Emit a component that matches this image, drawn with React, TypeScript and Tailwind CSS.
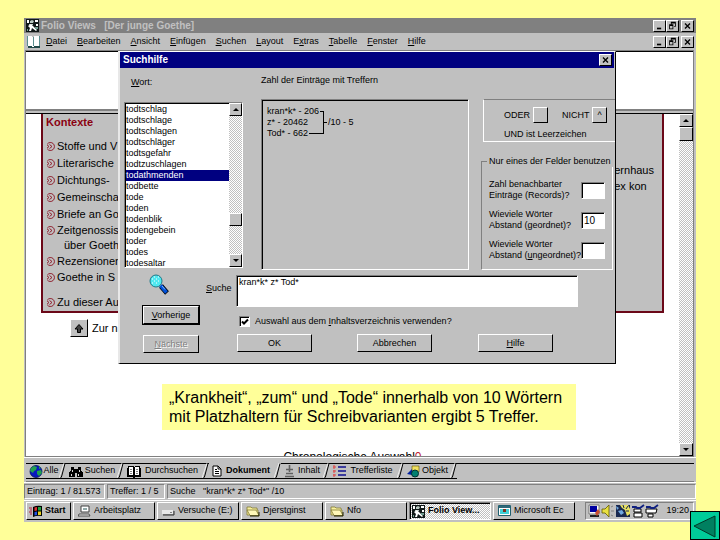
import { useState } from 'react'
import type { ReactNode } from 'react'
import clsx from 'clsx'

const WORDS = [
  'todtschlag',
  'todtschlage',
  'todtschlagen',
  'todtschläger',
  'todtsgefahr',
  'todtzuschlagen',
  'todathmenden',
  'todbette',
  'tode',
  'toden',
  'todenblik',
  'todengebein',
  'toder',
  'todes',
  'todesaltar',
]

const MENU = [
  '&Datei',
  '&Bearbeiten',
  '&Ansicht',
  '&Einfügen',
  '&Suchen',
  '&Layout',
  'E&xtras',
  '&Tabelle',
  '&Fenster',
  '&Hilfe',
]

const RAISED = 'border border-t-white border-l-white border-r-black border-b-black bg-[#c0c0c0]'
const GROOVE = 'border border-t-[#808080] border-l-[#808080] border-r-white border-b-white'
const SUNKEN = clsx(GROOVE, 'shadow-[inset_1px_1px_#000]')
const DITHER =
  'bg-[conic-gradient(#fff_25%,#c0c0c0_0_50%,#fff_0_75%,#c0c0c0_0)] bg-[length:2px_2px]'

// "&" marks the underlined letter, as in a resource file
const Mnemonic = ({ text }: { text: string }) => {
  const i = text.indexOf('&')
  if (i < 0) return <>{text}</>
  return (
    <span className="whitespace-pre">
      {text.slice(0, i)}
      <u className="underline-offset-1">{text[i + 1]}</u>
      {text.slice(i + 2)}
    </span>
  )
}

const FolioIcon = () => (
  <svg viewBox="0 0 13 13" className="h-[13px] w-[13px] shrink-0">
    <path d="M0 0h13v13H0z" fill="#101818" />
    <path d="M1 1h2v3H1zM9 1h3v2H9zM10 5h2v2h-2z" fill="#fff" />
    <path d="M4 2l2-1 2 1-1 2H4zM3 5h4v1H3z" fill="#b8c8c0" />
    <path d="M2 7l3-2 6 6-1 1-4-3-1 3H3l1-3z" fill="#fff" />
    <path d="M9 8h3v2H9zM1 10h1v2H1z" fill="#6f9c90" />
  </svg>
)

const BookIcon = () => (
  <svg viewBox="0 0 14 13" className="h-[13px] w-[14px] shrink-0" shapeRendering="crispEdges">
    <path d="M1 2h12v11H1z" fill="#204848" />
    <path d="M0 1h4l2 1 2-1h4v10H8l-2 1-2-1H0z" fill="#fff" />
    <path d="M0 1h1v10H0zM6 2h1v9H6zM12 1h1v10h-1z" fill="#5b9090" />
  </svg>
)

const Minimize = () => <path d="M3 8h5v2H3z" fill="#000" />
const Restore = () => (
  <path
    d="M4 1h6v6H8V6h1V3H5v1H4zM2 4h5v6H2zm1 2v3h3V6z"
    fill="#000"
    fillRule="evenodd"
  />
)
const Close = () => <path d="M3 3l6 6M9 3l-6 6" stroke="#000" strokeWidth="1.6" />

const CaptionButton = ({ label, children }: { label: string; children: ReactNode }) => (
  <button aria-label={label} className={clsx('h-3 w-[13px] shrink-0', RAISED)}>
    <svg viewBox="0 0 12 12" className="h-full w-full">
      {children}
    </svg>
  </button>
)

const CaptionButtons = () => (
  <div className="ml-auto flex pr-0.5">
    <CaptionButton label="Minimieren">
      <Minimize />
    </CaptionButton>
    <CaptionButton label="Wiederherstellen">
      <Restore />
    </CaptionButton>
    <span className="w-0.5" />
    <CaptionButton label="Schließen">
      <Close />
    </CaptionButton>
  </div>
)

const ScrollArrow = ({ up = false }: { up?: boolean }) => (
  <button
    aria-label={up ? 'Nach oben' : 'Nach unten'}
    className={clsx('flex h-[13px] w-full shrink-0 items-center justify-center', RAISED)}
  >
    <svg viewBox="0 0 6 3" className="h-[3px] w-1.5">
      <path d={up ? 'M0 3h6L3 0z' : 'M0 0h6L3 3z'} fill="#000" />
    </svg>
  </button>
)

const Bullet = () => (
  <svg viewBox="0 0 9 9" className="h-[9px] w-[9px] shrink-0" fill="none" stroke="#8a1020">
    <path d="M1.300 2A4 4 0 1 1 1.300 7" strokeWidth="0.900" />
    <path d="M3.500 2.500l2.500 2-2.500 2M1 2.800l2 1.700-2 1.700" strokeWidth="0.900" />
  </svg>
)

const Context = ({ children, short = false }: { children: ReactNode; short?: boolean }) => (
  <li className={clsx('flex items-center gap-0.5', short ? 'h-[15px]' : 'h-[17px]')}>
    <Bullet />
    <a href="#kontext">{children}</a>
  </li>
)

const DialogButton = ({
  text,
  isDefault = false,
  disabled = false,
}: {
  text: string
  isDefault?: boolean
  disabled?: boolean
}) => (
  <button
    disabled={disabled}
    className={clsx(
      'flex h-[18px] w-full items-center justify-center',
      RAISED,
      isDefault && 'outline outline-black',
      disabled && 'text-[#808080] [text-shadow:1px_1px_#fff]',
    )}
  >
    <Mnemonic text={text} />
  </button>
)

const DistanceField = ({ lines, value = '' }: { lines: [string, string]; value?: string }) => (
  <label className="flex items-center justify-between">
    <span className="whitespace-nowrap leading-[11px]">
      <Mnemonic text={lines[0]} />
      <br />
      <Mnemonic text={lines[1]} />
    </span>
    <input
      defaultValue={value}
      className={clsx('h-[17px] w-6 shrink-0 bg-white pl-0.5 text-[10px] outline-none', SUNKEN)}
    />
  </label>
)

const Lens = () => (
  <svg viewBox="0 0 20 21" className="h-[21px] w-5">
    <path d="M12 12l6 7" stroke="#000" strokeWidth="5" />
    <path d="M11.500 11.500l6 7" stroke="#0050d8" strokeWidth="3.500" />
    <path d="M13 12l3 3.500" stroke="#80b8ff" strokeWidth="1" />
    <circle cx="7" cy="7" r="6" fill="#50e8f0" stroke="#207888" />
    <path d="M3 5h1M5 3h1M7 5h1M9 3h1M5 7h1M9 7h1M7 9h1M3 9h1" stroke="#fff" />
  </svg>
)

const SearchDialog = () => {
  const [selected, setSelected] = useState('todathmenden')

  return (
    <section
      role="dialog"
      aria-label="Suchhilfe"
      className="absolute top-[51px] left-[118px] flex h-[313px] w-[498px] flex-col border border-l-2 border-t-white border-l-[#e8e8e8] border-r-black border-b-black bg-[#c0c0c0] text-[9px] leading-3"
    >
      <header className="mr-px flex h-4 items-center bg-[#000080] pr-0.5 pl-[3px] text-[10px] font-bold text-white">
        <h2>Suchhilfe</h2>
        <div className="ml-auto flex">
          <CaptionButton label="Schließen">
            <Close />
          </CaptionButton>
        </div>
      </header>

      <div className="flex h-[203px] pl-1">
        {/* Word list */}
        <div className="w-[119px] shrink-0">
          <h3 className="h-[34px] pt-2 pl-[7px]">
            <Mnemonic text="&Wort:" />
          </h3>
          <div className={clsx('flex h-[166px] overflow-hidden bg-white', GROOVE)}>
            <ul
              role="listbox"
              aria-label="Wort"
              className="flex-1 border-l border-black pt-px shadow-[inset_0_1px_#000]"
            >
              {WORDS.map((word) => (
                <li
                  key={word}
                  role="option"
                  aria-selected={word === selected}
                  onClick={() => setSelected(word)}
                  className={clsx(
                    'h-[11px] leading-[11px]',
                    word === selected && 'bg-[#000080] text-white',
                  )}
                >
                  {word}
                </li>
              ))}
            </ul>
            <div className={clsx('flex w-[13px] flex-col', DITHER)}>
              <ScrollArrow up />
              <div className="flex-1" />
              <div className={clsx('h-[13px]', RAISED)} />
              <div className="h-7" />
              <ScrollArrow />
            </div>
          </div>
        </div>

        {/* Hit tree */}
        <div className="ml-[18px] w-[208px] shrink-0">
          <h3 className="h-[31px] pt-1.5 whitespace-nowrap">Zahl der Einträge mit Treffern</h3>
          <div
            className={clsx('flex h-[171px] items-start pt-1.5 pl-[5px] leading-[11px]', SUNKEN)}
          >
            <div className="w-[53px] whitespace-nowrap">
              <p>kran*k* - 206</p>
              <p>z* - 20462</p>
              <p>Tod* - 662</p>
            </div>
            <svg
              viewBox="0 0 8 33"
              className="h-[33px] w-2 overflow-visible"
              fill="none"
              stroke="#000"
              shapeRendering="crispEdges"
            >
              <path d="M0 5.500h3.500v22H-11M3.500 16.500H7" />
            </svg>
            <p className="pt-[11px]">/10 - 5</p>
          </div>
        </div>

        {/* Operators and distances */}
        <div className="ml-3 flex min-w-0 flex-1 flex-col pt-[31px]">
          <div className="ml-0.5 h-[43px] border border-r-0 border-t-[#808080] border-b-white border-l-white pt-[7px] pl-5">
            <div className="flex items-center">
              <label htmlFor="oder" className="w-[29px]">
                ODER
              </label>
              <button id="oder" className={clsx('h-4 w-[15px]', RAISED)} />
              <label htmlFor="nicht" className="ml-3.5 w-[30px]">
                NICHT
              </label>
              <button id="nicht" className={clsx('h-4 w-[15px]', RAISED)}>
                ^
              </button>
            </div>
            <p className="pt-[5px]">UND ist Leerzeichen</p>
          </div>
          <fieldset className={clsx('mt-[13px] mr-0.5 h-[115px] min-w-0 px-[7px]', GROOVE)}>
            <legend className="-ml-0.5 px-0.5 whitespace-nowrap">
              Nur eines der Felder benutzen
            </legend>
            <div className="flex flex-col gap-2 pt-3">
              <DistanceField lines={['Zahl benachbarter', 'Einträge (Records)?']} />
              <DistanceField lines={['Wieviele Wörter', 'Abstand (geordnet)?']} value="10" />
              <DistanceField lines={['Wieviele Wörter', 'Abstand (&ungeordnet)?']} />
            </div>
          </fieldset>
        </div>
      </div>

      <div className="flex flex-1 pl-[23px]">
        <div className="flex w-14 shrink-0 flex-col">
          <div className="h-[35px] pt-[3px] pl-1.5">
            <Lens />
          </div>
          <DialogButton text="&Vorherige" isDefault />
          <div className="h-[11px]" />
          <DialogButton text="&Nächste" disabled />
        </div>
        <div className="ml-[7px] flex flex-1 flex-col">
          <div className="flex pt-1">
            <label htmlFor="suche" className="w-[30px] shrink-0 pt-[7px]">
              <Mnemonic text="&Suche" />
            </label>
            <textarea
              id="suche"
              defaultValue="kran*k* z* Tod*"
              className={clsx('h-8 w-[342px] resize-none bg-white pl-0.5 outline-none', SUNKEN)}
            />
          </div>
          <label className="mt-2 ml-[33px] flex items-center gap-[5px]">
            <span className="grid">
              <input
                type="checkbox"
                defaultChecked
                className={clsx(
                  'peer col-start-1 row-start-1 h-[11px] w-[11px] appearance-none bg-white',
                  SUNKEN,
                )}
              />
              <svg
                viewBox="0 0 11 11"
                className="pointer-events-none invisible col-start-1 row-start-1 h-[11px] w-[11px] peer-checked:visible"
              >
                <path d="M3 5.500l2 2L9 3.500" stroke="#000" strokeWidth="2" fill="none" />
              </svg>
            </span>
            <Mnemonic text="Auswahl aus dem &Inhaltsverzeichnis verwenden?" />
          </label>
          <div className="mt-[7px] ml-[31px] flex">
            <div className="w-[75px]">
              <DialogButton text="OK" />
            </div>
            <div className="ml-[45px] w-[75px]">
              <DialogButton text="Abbrechen" />
            </div>
            <div className="ml-[46px] w-[75px]">
              <DialogButton text="&Hilfe" />
            </div>
          </div>
        </div>
      </div>
    </section>
  )
}

const GlobeIcon = () => (
  <svg viewBox="0 0 14 13" className="h-[13px] w-3.5 shrink-0">
    <circle cx="7" cy="6.500" r="6" fill="#0818c0" stroke="#001050" strokeWidth="0.8" />
    <path d="M2 3l3-2 3 1-1 3-2 1-1 2-3-2zM8 6l4-1 1 3-3 3-2-2zM10 1l2 2-2 1z" fill="#20a050" />
  </svg>
)

const BinocularsIcon = () => (
  <svg viewBox="0 0 14 13" className="h-[13px] w-3.5 shrink-0" shapeRendering="crispEdges">
    <path d="M2 2h3v2h4V2h3v3l2 3v4H8V8H6v4H0V8l2-3z" fill="#000" />
    <path d="M3 5h1v2H3zM10 5h1v2h-1zM2 9h1v2H2zM9 9h1v2H9z" fill="#d8d8d8" />
  </svg>
)

const OpenBookIcon = () => (
  <svg viewBox="0 0 14 13" className="h-[13px] w-3.5 shrink-0" shapeRendering="crispEdges">
    <path d="M0 3h1V1h5l1 1 1-1h5v2h1v9H8v1H6v-1H0z" fill="#000" />
    <path d="M2 2h4v8H2zM8 2h4v8H8z" fill="#fff" />
    <path d="M3 4.500h2M3 6.500h2M3 8.500h2M9 4.500h2M9 6.500h2M9 8.500h2" stroke="#808080" />
  </svg>
)

const PageIcon = () => (
  <svg viewBox="0 0 10 12" className="h-3 w-2.5 shrink-0">
    <path d="M1 1h5l3 3v7H1z" fill="#fff" stroke="#000" />
    <path d="M6 1v3h3M3 4.500h2M3 6.500h4M3 8.500h4" stroke="#000" fill="none" />
  </svg>
)

const OutlineIcon = () => (
  <svg viewBox="0 0 11 13" className="h-[13px] w-[11px] shrink-0">
    <path d="M5.500 0v7M2 4.500h7M2 8.500h7M1 11.500h9" stroke="#606060" strokeWidth="1.600" />
  </svg>
)

const HitListIcon = () => (
  <svg viewBox="0 0 13 12" className="h-3 w-[13px] shrink-0">
    <path d="M1 0v4M0 2h3M1 5v3M0 6h3M1 9v3M0 10h3" stroke="#e04040" />
    <path d="M5 2h8M5 6h8M5 10h8" stroke="#101090" strokeWidth="1.600" />
  </svg>
)

const ObjectIcon = () => (
  <svg viewBox="0 0 13 13" className="h-[13px] w-[13px] shrink-0">
    <path d="M5 1h7v6H5z" fill="#f0e060" stroke="#605000" strokeWidth="0.600" />
    <path d="M0 9l5-5v6z" fill="#0020a0" />
    <circle cx="8" cy="8.500" r="3.500" fill="#008070" stroke="#003030" />
  </svg>
)

const Slash = () => (
  <svg viewBox="0 0 7 16" className="h-4 w-[7px] shrink-0">
    <path d="M1 15.500Q2.500 15 3 12L6 0.500" stroke="#000" fill="none" />
    <path d="M0 15L5 0" stroke="#fff" fill="none" strokeWidth="0.700" />
  </svg>
)

const TABS = [
  { label: 'Alle', icon: <GlobeIcon />, width: 'w-10' },
  { label: 'Suchen', icon: <BinocularsIcon />, width: 'w-[58px]' },
  { label: 'Durchsuchen', icon: <OpenBookIcon />, width: 'w-[85px]' },
  { label: 'Dokument', icon: <PageIcon />, width: 'w-[72px]' },
  { label: 'Inhalt', icon: <OutlineIcon />, width: 'w-[49px]' },
  { label: 'Trefferliste', icon: <HitListIcon />, width: 'w-[74px]' },
  { label: 'Objekt', icon: <ObjectIcon />, width: 'w-[53px]' },
]

const ViewTabs = () => {
  const [active, setActive] = useState('Dokument')

  return (
    <div role="tablist" className="mx-0.5 flex h-[19px] border-b border-[#808080] text-[9px]">
      {TABS.map((tab) => (
        <button
          key={tab.label}
          role="tab"
          aria-selected={tab.label === active}
          onClick={() => setActive(tab.label)}
          className={clsx(
            'flex h-4 shrink-0 items-center border-b border-black pl-[3px] whitespace-nowrap',
            tab.width,
            tab.label === active ? 'font-bold' : 'border-t',
          )}
        >
          {tab.icon}
          <span className="flex-1 text-center">{tab.label}</span>
          <Slash />
        </button>
      ))}
      <div className="flex-1 border-t border-black" />
    </div>
  )
}

const StatusCell = ({ className, children }: { className: string; children: ReactNode }) => (
  <p className={clsx('h-[15px] pl-0.5 leading-[13px] whitespace-pre', GROOVE, className)}>
    {children}
  </p>
)

const WindowsIcon = () => (
  <svg viewBox="0 0 14 12" className="h-3 w-3.5 shrink-0">
    <path d="M4 2q4-2 9-1v10q-5-1-9 1z" fill="#000" />
    <path d="M5.500 2.500L8 2v3.500l-2.500.5z" fill="#e03030" />
    <path d="M9 2h3v3.500H9z" fill="#20a040" />
    <path d="M5.500 7L8 6.500V10l-2.500.5z" fill="#2050e0" />
    <path d="M9 6.500h3V10H9z" fill="#e8d020" />
    <path d="M0 3h3M1 5h2M0 7h3M1 9h2" stroke="#b02040" />
  </svg>
)

const ComputerIcon = () => (
  <svg viewBox="0 0 13 12" className="h-3 w-[13px] shrink-0">
    <path d="M3 1h8v6H3z" fill="#fff" stroke="#404040" />
    <path d="M5 3h4v2H5z" fill="#90a8a8" />
    <path d="M1 9h10l1 2H0z" fill="#e8e8e8" stroke="#303030" strokeWidth="0.800" />
  </svg>
)

const DriveIcon = () => (
  <svg viewBox="0 0 13 12" className="h-3 w-[13px] shrink-0">
    <path d="M1 5h10l1 1v4H1z" fill="#a0a0a0" />
    <path d="M0 5h11v4H0z" fill="#e8e8e8" />
    <path d="M1 10h11V6" stroke="#303030" fill="none" />
    <path d="M8 7.500h2" stroke="#808080" />
  </svg>
)

const FolderIcon = () => (
  <svg viewBox="0 0 14 12" className="h-3 w-3.5 shrink-0">
    <path d="M1 10V2h4l1 1h5v2h1v5z" fill="#f8f0a0" stroke="#807830" strokeWidth="0.800" />
    <path d="M1 5h9l3 5.500H4z" fill="#fff8b8" stroke="#807830" strokeWidth="0.800" />
    <path d="M4 11h9V7" stroke="#202000" fill="none" />
  </svg>
)

const EditorIcon = () => (
  <svg viewBox="0 0 13 12" className="h-3 w-[13px] shrink-0">
    <path d="M.5.500h12v10H.5z" fill="#fff" stroke="#206070" />
    <path d="M1 1h11v2H1z" fill="#306878" />
    <path d="M2 4h9v5H2z" fill="#40d0d8" />
    <path d="M5 4h3v3H5z" fill="#803020" />
  </svg>
)

const TASKS = [
  { label: 'Arbeitsplatz', icon: <ComputerIcon /> },
  { label: 'Versuche (E:)', icon: <DriveIcon /> },
  { label: 'Djerstginst', icon: <FolderIcon /> },
  { label: 'Nfo', icon: <FolderIcon /> },
  { label: 'Folio View...', icon: <FolioIcon />, active: true },
  { label: 'Microsoft Ec', icon: <EditorIcon /> },
]

const TrayIcons = () => (
  <svg viewBox="0 0 72 14" className="h-3.5 w-[72px] shrink-0">
    {/* monitor with pen */}
    <path d="M1 1h10v9H1z" fill="#fff" stroke="#606060" strokeWidth="0.800" />
    <path d="M2 2h7v6H2z" fill="#0000a0" />
    <path d="M2 11h9v2H2z" fill="#202020" />
    <path d="M10 5l-3 4 2 3 3-4z" fill="#c85030" />
    {/* speaker */}
    <path d="M14 5h3l4-4v12l-4-4h-3z" fill="#e8e040" stroke="#605800" strokeWidth="0.800" />
    <path d="M23 3l2-1M23 7h3M23 11l2 1" stroke="#808080" />
    {/* shell */}
    <path d="M28 1h14v12H28z" fill="#182850" />
    <path d="M32 1h8l2 4v5l-3 2-2-6-3-2z" fill="#e8e060" />
    <path d="M28 2l3 2-2 2zM30 7l4-1 2 3-3 2z" fill="#70a8e0" />
    <path d="M35 1l1 3M40 2l-2 3M41 7l-3 0" stroke="#182850" fill="none" />
    {/* input devices */}
    <path d="M46 5h7v3h-7zM46 9h8v4h-8z" fill="#fff" stroke="#000" />
    <path d="M44 3h4l1 1h3l4-3" stroke="#102080" strokeWidth="1.800" fill="none" />
    <path d="M58 5h11l-1 4H58zM60 10h5v3h-5z" fill="#fff" stroke="#000" />
    <path d="M58 3h4l1 1h3l4-3" stroke="#102080" strokeWidth="1.800" fill="none" />
  </svg>
)

const Taskbar = () => (
  <footer className="flex items-center gap-0.5 border-t border-white px-0.5 pt-px pb-0.5 text-[9px]">
    <button className={clsx('flex h-[18px] w-[45px] items-center gap-0.5 pl-0.5', RAISED)}>
      <WindowsIcon />
      <b>Start</b>
    </button>
    {TASKS.map((task) => (
      <button
        key={task.label}
        className={clsx(
          'flex h-[18px] w-[82px] items-center gap-[3px] whitespace-nowrap',
          task.active ? clsx('pl-0.5 font-bold', SUNKEN, DITHER) : clsx('pl-1', RAISED),
        )}
      >
        {task.icon}
        {task.label}
      </button>
    ))}
    <div className={clsx('ml-auto flex h-[18px] w-[109px] items-center pl-0.5', GROOVE)}>
      <TrayIcons />
      <time className="ml-auto pr-1">19:20</time>
    </div>
  </footer>
)

const DocumentPane = () => (
  <div className="flex min-h-0 flex-1 border-t border-black bg-white">
    <div className="flex flex-1 flex-col overflow-hidden">
      <div className="mr-[15px] ml-[15px] flex h-[199px] justify-between border-2 border-t-0 border-[#6b0818] bg-[#c0c0c0] pr-2 pl-[3px] text-[11px]">
        <div className="whitespace-nowrap">
          <h2 className="h-6 leading-[17px] font-bold text-[#8b0010]">Kontexte</h2>
          <ul>
            <Context>Stoffe und V</Context>
            <Context>Literarische</Context>
            <Context>Dichtungs-</Context>
            <Context>Gemeinscha</Context>
            <Context>Briefe an Go</Context>
            <Context short>Zeitgenossis</Context>
            <li className="h-[15px] pl-[18px] leading-[15px]">über Goeth</li>
            <Context>Rezensionen</Context>
            <Context short>Goethe in S</Context>
            <li className="h-[9px]" />
            <Context>Zu dieser Au</Context>
          </ul>
        </div>
        <div className="pt-12 leading-4">
          <p>ernhaus</p>
          <p>ex kon</p>
        </div>
      </div>
      <div className="mt-1.5 ml-11 flex items-center gap-1 text-[11px]">
        <button
          aria-label="Nach oben"
          className={clsx('flex h-[18px] w-[18px] items-center justify-center', RAISED)}
        >
          <svg viewBox="0 0 10 9" className="h-[9px] w-2.5">
            <path d="M5 .5L9 5H6.500v3.500h-3V5H1z" fill="#404040" stroke="#000" />
          </svg>
        </button>
        <span className="whitespace-nowrap">Zur n</span>
      </div>
      <p className="mt-auto h-[7px] overflow-hidden text-center text-[12px] leading-4">
        Chronologische Auswahl<span className="text-[#c02030]">0</span>
      </p>
    </div>
    <div className={clsx('flex w-3.5 flex-col', DITHER)}>
      <ScrollArrow up />
      <div className={clsx('h-3.5', RAISED)} />
      <div className="flex-1" />
      <ScrollArrow />
    </div>
  </div>
)

export default function App() {
  return (
    <div className="relative flex min-h-screen flex-col bg-[#ffff99] px-6 py-[18px] font-['Liberation_Sans',Arial,sans-serif] text-black">
      <main className="flex flex-1 flex-col bg-[#c0c0c0]">
        <header className="flex h-[15px] items-center gap-0.5 bg-[#808080] pl-0.5 text-[10px] text-[#c0c0c0]">
          <FolioIcon />
          <h1 className="font-bold whitespace-pre">Folio Views   [Der junge Goethe]</h1>
          <CaptionButtons />
        </header>

        <nav className="flex h-[17px] items-center pl-[3px] text-[9px]">
          <BookIcon />
          <div className="ml-[5px] flex gap-2.5">
            {MENU.map((item) => (
              <button key={item}>
                <Mnemonic text={item} />
              </button>
            ))}
          </div>
          <CaptionButtons />
        </nav>

        <div className="mr-0.5 ml-px flex flex-1 flex-col border border-[#808080]">
          <div className="h-[60px] border-t border-b-2 border-t-black border-b-[#808080] bg-white" />
          <div className="h-0.5" />
          <DocumentPane />
        </div>
        <div className="mb-[5px] border-t border-white" />

        <ViewTabs />

        <div className="flex gap-0.5 border-t border-white pt-px pb-px text-[9px]">
          <StatusCell className="w-[81px]">Eintrag: 1 / 81.573</StatusCell>
          <StatusCell className="w-[58px]">Treffer: 1 / 5</StatusCell>
          <StatusCell className="flex-1">{'Suche   "kran*k* z* Tod*" /10'}</StatusCell>
        </div>

        <Taskbar />
      </main>

      <SearchDialog />

      {/* Slide caption */}
      <p className="absolute top-[384px] left-[162px] w-[414px] bg-[#ffff99] px-[7px] py-1 text-[16px] leading-[19px] whitespace-nowrap">
        „Krankheit“, „zum“ und „Tode“ innerhalb von 10 Wörtern
        <br />
        mit Platzhaltern für Schreibvarianten ergibt 5 Treffer.
      </p>

      <button
        aria-label="Zurück"
        className="absolute right-0 bottom-0 h-[29px] w-[30px] border border-black bg-[#00cc99]"
      >
        <svg viewBox="0 0 28 27" className="h-full w-full">
          <path d="M3 14L24 4v21z" fill="#008060" stroke="#003828" />
        </svg>
      </button>
    </div>
  )
}
